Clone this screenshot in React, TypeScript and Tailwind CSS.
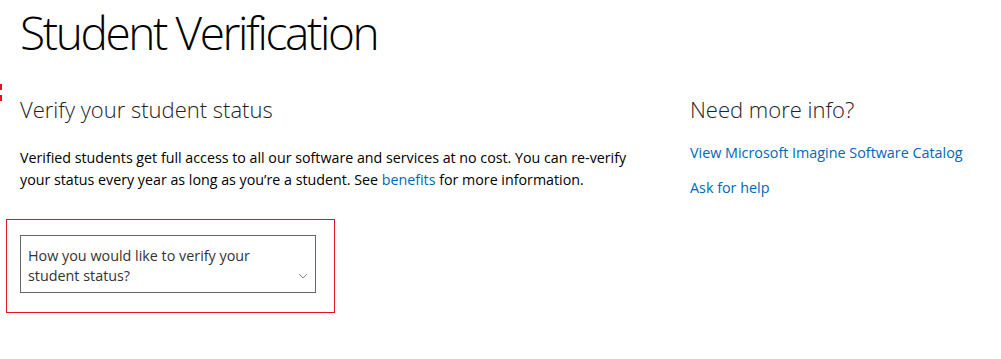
import React from 'react';

function App() {
    return (
        <div className="min-h-[359px] w-[1001px] bg-white text-[#000] font-['Open_Sans',sans-serif] relative">
            <div className="absolute left-0 top-[84px] flex flex-col gap-[5px]">
                <span className="block w-[2px] h-[6px] bg-[#e81123]" />
                <span className="block w-[2px] h-[6px] bg-[#e81123]" />
            </div>
            <div className="pl-[20px] pt-[2px]">
                <h1 className="text-[46px] leading-[60px] font-light tracking-[-2.4px] text-[#000]">Student Verification</h1>
                <div className="flex mt-[32px]">
                    <div className="w-[670px]">
                        <h2 className="text-[22px] leading-[30px] font-light text-[#222]">Verify your student status</h2>
                        <p className="mt-[23px] text-[14.25px] leading-[22px] text-[#000]">
                            Verified students get full access to all our software and services at no cost. You can re-verify
                            <br />
                            your status every year as long as you&rsquo;re a student. See{' '}
                            <a href="#" className="text-[#0067b8]">benefits</a> for more information.
                        </p>
                        <div className="mt-[28px] ml-[-14px] w-[329px] h-[94px] border border-[#e81123] pl-[13px] pt-[15px]">
                            <button className="w-[296px] h-[58px] border border-[#666] flex items-end justify-between pl-[7px] pr-[7px] pb-[6px] text-left">
                                <span className="text-[14.35px] leading-[20px] text-[#333]">
                                    How you would like to verify your
                                    <br />
                                    student status?
                                </span>
                                <svg width="10" height="6" viewBox="0 0 10 6" className="mb-[7px]">
                                    <path d="M1 1l4 4 4-4" fill="none" stroke="#888" strokeWidth="1" />
                                </svg>
                            </button>
                        </div>
                    </div>
                    <div>
                        <h2 className="text-[22px] leading-[30px] font-light text-[#222]">Need more info?</h2>
                        <div className="mt-[18px] flex flex-col gap-[13px] text-[14.35px] leading-[22px]">
                            <a href="#" className="text-[#0067b8]">View Microsoft Imagine Software Catalog</a>
                            <a href="#" className="text-[#0067b8]">Ask for help</a>
                        </div>
                    </div>
                </div>
            </div>
        </div>
    );
}

export default App;
